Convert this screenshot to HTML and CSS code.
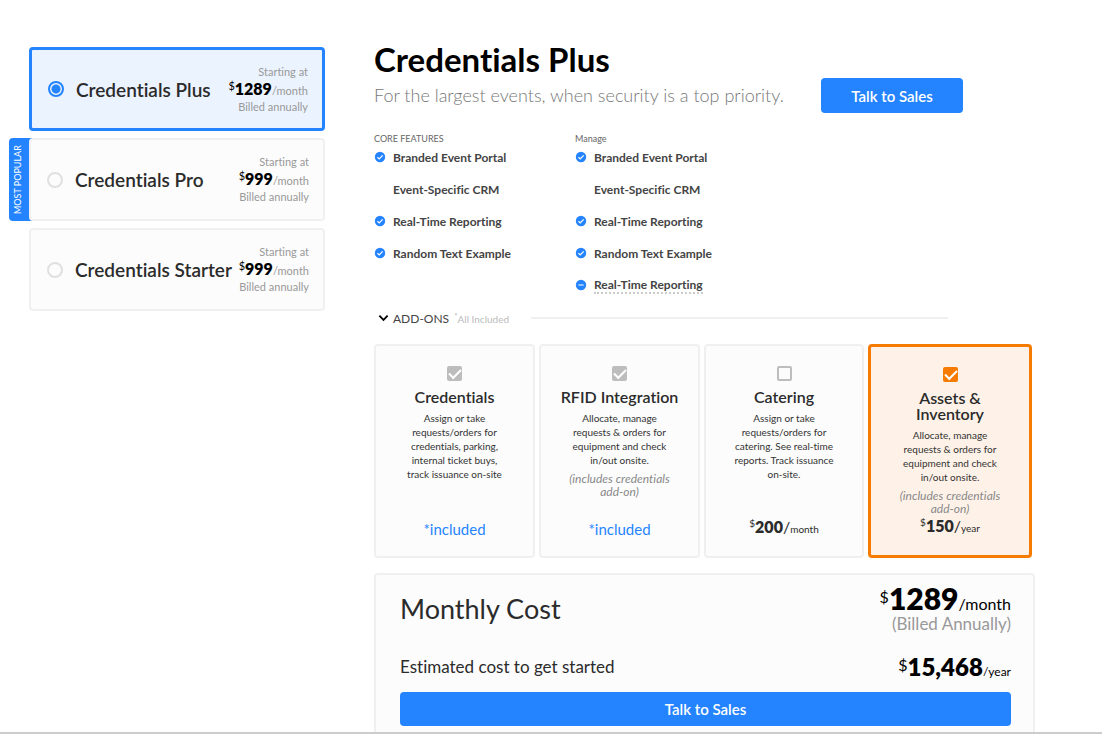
FILE: index.html
```html
<!DOCTYPE html>
<html lang="en">
<head>
<meta charset="utf-8">
<title>Credentials Plus</title>
<link rel="stylesheet" href="styles.css">
</head>
<body>
<svg class="sprite" aria-hidden="true">
  <symbol id="check" viewBox="0 0 12 12"><circle cx="6" cy="6" r="5.2" fill="#2484ff"/><path d="M3.4 6.1l1.8 1.8 3.5-3.6" fill="none" stroke="#fff" stroke-width="1.2"/></symbol>
  <symbol id="minus" viewBox="0 0 12 12"><circle cx="6" cy="6" r="5.2" fill="#2484ff"/><path d="M3.4 6h5.2" stroke="#b9d7ff" stroke-width="1.5"/></symbol>
</svg>
<div class="page">
  <aside class="plans">
    <label class="plan plan-on">
      <input class="radio" type="radio" name="plan" checked>
      <span class="plan-name">Credentials Plus</span>
      <span class="plan-price"><span>Starting at</span><span class="plan-cost"><sup>$</sup><b>1289</b>/month</span><span>Billed annually</span></span>
    </label>
    <div class="popular">
      <span class="tag">MOST POPULAR</span>
      <label class="plan">
        <input class="radio" type="radio" name="plan">
        <span class="plan-name">Credentials Pro</span>
        <span class="plan-price"><span>Starting at</span><span class="plan-cost"><sup>$</sup><b>999</b>/month</span><span>Billed annually</span></span>
      </label>
    </div>
    <label class="plan">
      <input class="radio" type="radio" name="plan">
      <span class="plan-name">Credentials Starter</span>
      <span class="plan-price"><span>Starting at</span><span class="plan-cost"><sup>$</sup><b>999</b>/month</span><span>Billed annually</span></span>
    </label>
  </aside>
  <main class="detail">
    <header class="head">
      <div>
        <h1 class="title">Credentials Plus</h1>
        <p class="lead">For the largest events, when security is a top priority.</p>
      </div>
      <button class="button head-button" type="button">Talk to Sales</button>
    </header>
    <div class="features">
      <section>
        <h2 class="features-title">CORE FEATURES</h2>
        <ul class="list">
          <li class="item"><svg class="dot"><use href="#check"/></svg>Branded Event Portal</li>
          <li class="item"><span class="dot"></span>Event-Specific CRM</li>
          <li class="item"><svg class="dot"><use href="#check"/></svg>Real-Time Reporting</li>
          <li class="item"><svg class="dot"><use href="#check"/></svg>Random Text Example</li>
        </ul>
      </section>
      <section>
        <h2 class="features-title">Manage</h2>
        <ul class="list">
          <li class="item"><svg class="dot"><use href="#check"/></svg>Branded Event Portal</li>
          <li class="item"><span class="dot"></span>Event-Specific CRM</li>
          <li class="item"><svg class="dot"><use href="#check"/></svg>Real-Time Reporting</li>
          <li class="item"><svg class="dot"><use href="#check"/></svg>Random Text Example</li>
          <li class="item"><svg class="dot"><use href="#minus"/></svg><span class="hint">Real-Time Reporting</span></li>
        </ul>
      </section>
    </div>
    <div class="addons-bar">
      <button class="toggle" type="button"><svg class="chevron" viewBox="0 0 12 8"><path d="M1.5 1.5L6 6l4.500-4.500" fill="none" stroke="#000" stroke-width="2"/></svg>ADD-ONS</button>
      <span class="all"><sup class="star">*</sup>All Included</span>
      <hr class="rule">
    </div>
    <div class="addons">
      <label class="addon">
        <input class="box" type="checkbox" checked disabled>
        <span class="addon-name">Credentials</span>
        <span class="addon-text">Assign or take requests/orders for credentials, parking, internal ticket buys, track issuance on-site</span>
        <span class="included">*included</span>
      </label>
      <label class="addon">
        <input class="box" type="checkbox" checked disabled>
        <span class="addon-name">RFID Integration</span>
        <span class="addon-text">Allocate, manage requests &amp; orders for equipment and check in/out onsite.</span>
        <em class="note">(includes credentials add-on)</em>
        <span class="included">*included</span>
      </label>
      <label class="addon">
        <input class="box" type="checkbox">
        <span class="addon-name">Catering</span>
        <span class="addon-text">Assign or take requests/orders for catering. See real-time reports. Track issuance on-site.</span>
        <span class="addon-price"><sup>$</sup><b>200</b>/<small>month</small></span>
      </label>
      <label class="addon addon-on">
        <input class="box" type="checkbox" checked>
        <span class="addon-name">Assets &amp; Inventory</span>
        <span class="addon-text">Allocate, manage requests &amp; orders for equipment and check in/out onsite.</span>
        <em class="note">(includes credentials add-on)</em>
        <span class="addon-price"><sup>$</sup><b>150</b>/<small>year</small></span>
      </label>
    </div>
    <section class="cost">
      <div class="cost-row">
        <h2 class="cost-title">Monthly Cost</h2>
        <div class="cost-side">
          <div class="total"><sup>$</sup><b>1289</b>/month</div>
          <div class="billed">(Billed Annually)</div>
        </div>
      </div>
      <div class="cost-row cost-start">
        <span class="estimate">Estimated cost to get started</span>
        <div class="yearly"><sup>$</sup><b>15,468</b><small>/year</small></div>
      </div>
      <button class="button" type="button">Talk to Sales</button>
    </section>
  </main>
</div>
</body>
</html>
```
FILE: styles.css
```css
* { box-sizing: border-box; }
body { margin: 0; background: #fff; color: #2b2b2b; font-family: Lato, "Open Sans", sans-serif; font-size: 12px; font-variant-ligatures: none; }
h1, h2, p, ul { margin: 0; padding: 0; font-weight: 400; }
sup { line-height: 0; }
.sprite { display: none; }

.page {
  display: grid;
  grid-template-columns: minmax(0, 296fr) minmax(0, 661fr);
  column-gap: 49px;
  height: calc(100vh - 1px);
  padding: 47px 67px 0 29px;
  overflow: hidden;
  border-bottom: 2px solid #ccc;
}

.plans { display: flex; flex-direction: column; gap: 7px; }
.plan {
  position: relative;
  display: flex;
  align-items: center;
  min-height: 83px;
  padding: 0 14px 0 16px;
  border: 2px solid #f0f0f0;
  border-radius: 4px;
  background: #fcfcfc;
}
.plan-on { min-height: 84px; border: 3px solid #2484ff; background: #ebf3ff; }
.radio {
  appearance: none;
  flex: none;
  width: 16px;
  height: 16px;
  margin: 0 12px 0 0;
  border: 2px solid #e0e0e0;
  border-radius: 50%;
}
.radio:checked { border-color: #2484ff; background: radial-gradient(circle, #2484ff 4px, transparent 5px); }
.plan-name { flex: 1; font-size: 19px; font-weight: 600; white-space: nowrap; }
.plan-price { display: flex; flex-direction: column; align-items: flex-end; color: #999; font-size: 11px; line-height: 16px; white-space: nowrap; }
.plan-cost { line-height: 17px; }
.plan-cost b { color: #000; font-size: 16px; font-weight: 800; }
.plan-cost sup { color: #000; font-size: 11px; }
.popular { position: relative; }
.tag {
  position: absolute;
  top: 0;
  bottom: 0;
  left: -20px;
  width: 26px;
  padding-left: 8px;
  border-radius: 0 4px 4px 0;
  background: #2484ff;
  color: #fff;
  font-size: 9px;
  line-height: 18px;
  text-align: center;
  writing-mode: vertical-rl;
  transform: rotate(180deg);
}

.head { display: flex; justify-content: space-between; align-items: flex-end; padding-right: 72px; margin-top: -6px; }
.title { color: #000; font-size: 33px; font-weight: 700; line-height: 36px; }
.lead { margin-top: 6px; color: #777; font-size: 18px; font-weight: 300; line-height: 24px; }
.button {
  height: 34px;
  border: 0;
  border-radius: 4px;
  background: #2484ff;
  color: #fff;
  font: 600 15px Lato, "Open Sans", sans-serif;
}
.head-button { width: 142px; height: 35px; margin-bottom: -6px; }

.features { display: flex; margin-top: 24px; }
.features > section { width: 201px; }
.features-title { color: #666; font-size: 9px; line-height: 16px; }
.list { display: grid; gap: 16px; margin-top: 2px; list-style: none; }
.item { display: flex; align-items: center; height: 16px; color: #444; font-size: 12px; font-weight: 700; }
.dot { width: 12px; height: 12px; margin-right: 7px; }
.hint { border-bottom: 2px dotted #ccc; }

.addons-bar { display: flex; align-items: center; height: 20px; margin-top: 15px; padding: 0 87px 0 4px; }
.toggle { display: flex; align-items: center; gap: 4px; padding: 0; border: 0; background: none; color: #444; font: 12px Lato, "Open Sans", sans-serif; }
.chevron { width: 11px; height: 8px; }
.all { padding: 2px 22px 0 5px; color: #bbb; font-size: 10px; }
.star { font-size: 8px; }
.rule { flex: 1; margin: 0; border: 0; border-top: 2px solid #f0f0f0; }

.addons { display: grid; grid-template-columns: 161fr 161fr 160fr 164fr; gap: 4px; margin-top: 16px; padding-right: 3px; }
.addon {
  display: flex;
  flex-direction: column;
  align-items: center;
  min-height: 214px;
  padding: 20px 24px 18px;
  border: 2px solid #f0f0f0;
  border-radius: 4px;
  background: #fcfcfc;
  text-align: center;
}
.addon-on { border: 3px solid #f57c00; background: #fef2e8; }
.box {
  appearance: none;
  display: grid;
  place-items: center;
  flex: none;
  width: 15px;
  height: 15px;
  margin: 0 0 8px;
  border: 2px solid #bdbdbd;
  border-radius: 2px;
}
.box:checked { background: #bdbdbd; }
.box:checked::before { content: ""; width: 10px; height: 5px; margin-bottom: 3px; border: solid #fff; border-width: 0 0 2px 2px; transform: rotate(-45deg); }
.addon-on .box { border-color: #f57c00; background: #f57c00; }
.addon-name { margin: 0 -12px; font-size: 16px; font-weight: 600; line-height: 16px; }
.addon-on .addon-name { margin: 0 12px; }
.addon-text { margin-top: 6px; color: #333; font-size: 10px; line-height: 14px; }
.note { margin-top: 5px; color: #888; font-size: 12px; line-height: 13px; }
.included, .addon-price { margin-top: auto; line-height: 18px; }
.included { color: #2484ff; font-size: 15px; }
.addon-price { font-size: 16px; }
.addon-price b { font-weight: 800; }
.addon-price sup, .addon-price small { font-size: 10px; }

.cost { display: flex; flex-direction: column; margin-top: 15px; padding: 12px 22px 24px 24px; border: 2px solid #f0f0f0; border-radius: 4px; background: #fcfcfc; }
.cost-row { display: flex; justify-content: space-between; color: #000; }
.cost-title { color: #2b2b2b; font-size: 27px; line-height: 44px; }
.cost-side { text-align: right; }
.total { font-size: 16px; line-height: 22px; }
.total b { font-size: 30px; font-weight: 800; }
.total sup { font-size: 16px; vertical-align: 7px; }
.billed { color: #999; font-size: 17px; line-height: 18px; }
.cost-start { align-items: center; height: 30px; margin: 18px 0 11px; }
.estimate { color: #2b2b2b; font-size: 17px; }
.yearly b { font-size: 24px; font-weight: 800; }
.yearly sup { font-size: 16px; }
.yearly small { font-size: 12px; }
```
